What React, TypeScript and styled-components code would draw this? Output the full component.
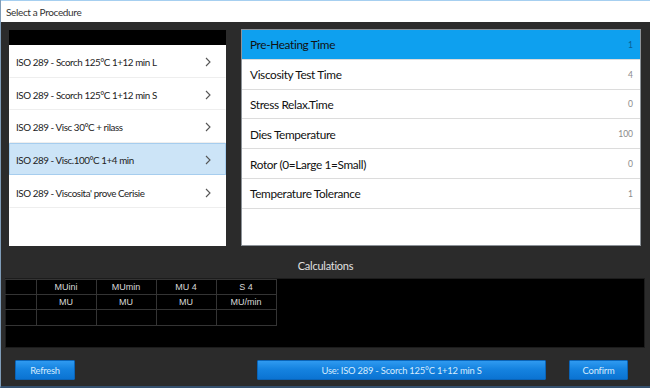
import React from "react";
import styled, { createGlobalStyle } from "styled-components";

const Global = createGlobalStyle`
  html, body { margin: 0; padding: 0; background: #2b2b2b; overflow: hidden; }
  * { box-sizing: border-box; }
`;

const Window = styled.div`
  width: 650px;
  height: 388px;
  display: flex;
  flex-direction: column;
  background: #2b2b2b;
  border-left: 1px solid #7f9cb8;
  border-bottom: 2px solid #34506e;
  font-family: Lato, "Noto Sans", sans-serif;
`;

const TitleBar = styled.div`
  height: 22px;
  flex: none;
  background: #ffffff;
  border-top: 1px solid #a6cff0;
  display: flex;
  align-items: center;
  padding-left: 5px;
  font-size: 10px;
  letter-spacing: -0.35px;
  color: #333;
`;

const TopRow = styled.div`
  display: grid;
  grid-template-columns: 217px 400px;
  column-gap: 15px;
  padding: 7px 0 0 8px;
  height: 224px;
  flex: none;
`;

const LeftPanel = styled.div`
  margin-top: 1px;
  display: flex;
  flex-direction: column;
  height: 216px;
`;

const BlackHeader = styled.div`
  height: 15px;
  background: #000;
  flex: none;
`;

const ProcList = styled.div`
  flex: 1;
  background: #fff;
  display: flex;
  flex-direction: column;
`;

const ProcRow = styled.div<{ $selected?: boolean }>`
  height: 32.6px;
  flex: none;
  display: flex;
  align-items: center;
  justify-content: space-between;
  padding: 2px 14px 0 6px;
  font-size: 9.8px;
  letter-spacing: -0.42px;
  color: #222;
  background: ${(p) => (p.$selected ? "#cce4f7" : "#fff")};
  border: 1px solid ${(p) => (p.$selected ? "#a6cdee" : "transparent")};
  border-bottom: 1px solid ${(p) => (p.$selected ? "#a6cdee" : "#eeeeee")};
`;

const RightPanel = styled.div`
  height: 217px;
  background: #fff;
  border: 1px solid #8d9399;
  display: flex;
  flex-direction: column;
`;

const ParamRow = styled.div<{ $active?: boolean }>`
  height: 29.8px;
  flex: none;
  display: flex;
  align-items: center;
  justify-content: space-between;
  padding: 1px 7px 0 8px;
  background: ${(p) => (p.$active ? "#0ea0ef" : "#fff")};
  border-bottom: 1px solid #dcdcdc;
`;

const ParamLabel = styled.span`
  font-size: 11.8px;
  letter-spacing: -0.35px;
  color: #111;
`;

const ParamValue = styled.span<{ $active?: boolean }>`
  font-size: 8.5px;
  color: ${(p) => (p.$active ? "#0a5f94" : "#8a8a8a")};
`;

const CalcTitle = styled.div`
  height: 32px;
  flex: none;
  display: flex;
  align-items: center;
  justify-content: center;
  padding-top: 7px;
  font-size: 11px;
  letter-spacing: -0.25px;
  color: #e0e0e0;
`;

const CalcArea = styled.div`
  height: 70px;
  flex: none;
  margin: 0 5px 0 4px;
  background: #000;
  border: 1px solid #1c1c1c;
`;

const CalcTable = styled.table`
  border-collapse: collapse;
  font-family: "Liberation Sans", Arial, sans-serif;
  font-size: 9px;
  color: #d8d8d8;
  margin-left: -1px;
`;

const Cell = styled.td<{ $w: number; $h: number }>`
  width: ${(p) => p.$w}px;
  height: ${(p) => p.$h}px;
  padding: 0;
  text-align: center;
  border: 1px solid #343434;
  &:first-child { border-left: none; }
`;

const ButtonBar = styled.div`
  flex: 1;
  display: flex;
  align-items: flex-start;
  gap: 23px;
  padding: 12px 22px 0 14px;
`;

const Button = styled.button<{ $w: number; $left?: boolean }>`
  width: ${(p) => p.$w}px;
  height: 20px;
  margin-right: ${(p) => (p.$left ? "auto" : "0")};
  border: 1px solid #0a64b8;
  border-radius: 1px;
  background: linear-gradient(#2f9af0, #1583e0 45%, #0b73d2);
  color: #d6ebfc;
  font-family: Lato, "Noto Sans", sans-serif;
  font-size: 9.4px;
  letter-spacing: -0.22px;
  display: flex;
  align-items: center;
  justify-content: center;
  padding: 0;
`;

const Chevron = () => (
  <svg width="6" height="10" viewBox="0 0 6 10">
    <polyline points="1,1 5,5 1,9" fill="none" stroke="#555" strokeWidth="1.1" />
  </svg>
);

const procedures = [
  "ISO 289 - Scorch 125°C 1+12 min L",
  "ISO 289 - Scorch 125°C 1+12 min S",
  "ISO 289 - Visc 30°C + rilass",
  "ISO 289 - Visc.100°C 1+4 min",
  "ISO 289 - Viscosita' prove Cerisie",
];

const params: [string, string][] = [
  ["Pre-Heating Time", "1"],
  ["Viscosity Test Time", "4"],
  ["Stress Relax.Time", "0"],
  ["Dies Temperature", "100"],
  ["Rotor (0=Large 1=Small)", "0"],
  ["Temperature Tolerance", "1"],
];

const widths = [31, 60, 60, 60, 60];
const rows = [
  ["", "MUini", "MUmin", "MU 4", "S 4"],
  ["", "MU", "MU", "MU", "MU/min"],
  ["", "", "", "", ""],
];
const heights = [15, 15, 16];

export default function App() {
  return (
    <>
      <Global />
      <Window>
        <TitleBar>Select a Procedure</TitleBar>
        <TopRow>
          <LeftPanel>
            <BlackHeader />
            <ProcList>
              {procedures.map((p, i) => (
                <ProcRow key={p} $selected={i === 3}>
                  <span>{p}</span>
                  <Chevron />
                </ProcRow>
              ))}
            </ProcList>
          </LeftPanel>
          <RightPanel>
            {params.map(([l, v], i) => (
              <ParamRow key={l} $active={i === 0}>
                <ParamLabel>{l}</ParamLabel>
                <ParamValue $active={i === 0}>{v}</ParamValue>
              </ParamRow>
            ))}
          </RightPanel>
        </TopRow>
        <CalcTitle>Calculations</CalcTitle>
        <CalcArea>
          <CalcTable>
            <tbody>
              {rows.map((r, ri) => (
                <tr key={ri}>
                  {r.map((c, ci) => (
                    <Cell key={ci} $w={widths[ci]} $h={heights[ri]}>
                      {c}
                    </Cell>
                  ))}
                </tr>
              ))}
            </tbody>
          </CalcTable>
        </CalcArea>
        <ButtonBar>
          <Button $w={60} $left>Refresh</Button>
          <Button $w={289}>Use: ISO 289 - Scorch 125°C 1+12 min S</Button>
          <Button $w={59}>Confirm</Button>
        </ButtonBar>
      </Window>
    </>
  );
}
